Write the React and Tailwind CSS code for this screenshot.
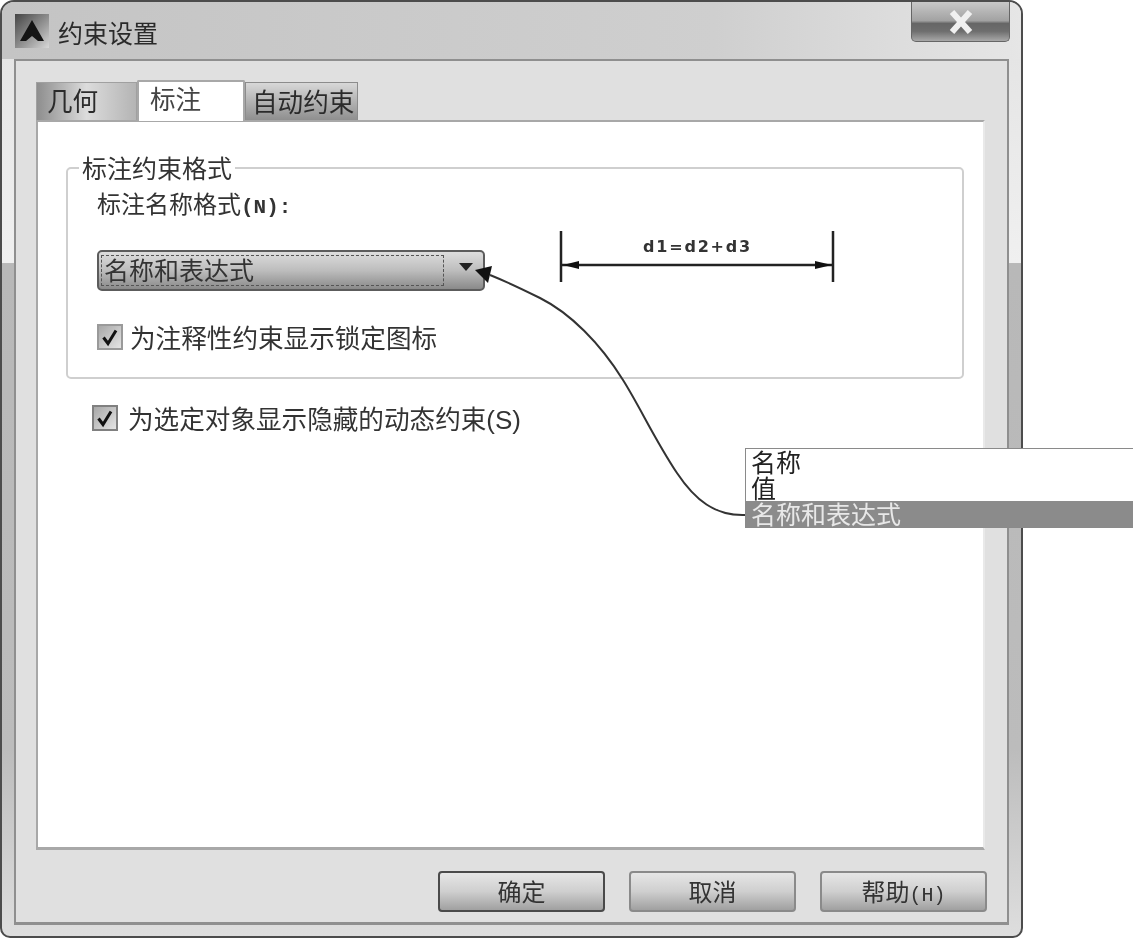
const cjk = { fontFamily: '"Noto Sans CJK SC", "Liberation Sans", sans-serif' };
const mono = { fontFamily: '"Liberation Mono", "Noto Sans CJK SC", monospace' };
const sans = { fontFamily: '"Liberation Sans", "Noto Sans CJK SC", sans-serif' };

function Check({ className = "" }) {
  return (
    <span className={"flex h-[26px] w-[26px] shrink-0 items-center justify-center border-2 border-[#9a9a9a] bg-gradient-to-br from-[#a8a8a8] to-[#e4e4e4] " + className}>
      <svg width="20" height="20" viewBox="0 0 20 20">
        <path d="M3.5 10.5 L8 16.5 L16 3.5" fill="none" stroke="#111" strokeWidth="3" />
      </svg>
    </span>
  );
}

function Button({ children, dark }) {
  return (
    <div className={"flex h-[41px] w-[167px] items-center justify-center rounded-[4px] border-2 bg-gradient-to-b from-[#e6e6e6] via-[#cfcfcf] to-[#a0a0a0] pb-[2px] text-[24px] leading-none text-[#333] " + (dark ? "border-[#4a4a4a]" : "border-[#8a8a8a]")}>
      {children}
    </div>
  );
}

export default function App() {
  return (
    <div className="relative h-[940px] w-[1133px] overflow-hidden bg-white blur-[0.5px]" style={cjk}>
      <div className="flex h-[938px] w-[1023px] flex-col rounded-t-[14px] rounded-b-[10px] border-2 border-[#4c4c4c] bg-[linear-gradient(180deg,#e2e2e2_0%,#f0f0f0_27.9%,#b8b8b8_28%,#bcbcbc_80%,#dedede_100%)]">
        {/* title bar */}
        <div className="flex h-[57px] shrink-0 items-start rounded-t-[12px] bg-gradient-to-r from-[#c4c4c4] via-[#cfcfcf] via-70% to-[#e6e6e6] pl-[13px] pr-[11px]">
          <svg width="34" height="34" viewBox="0 0 34 34" className="mt-[12px]">
            <defs>
              <linearGradient id="ic" x1="0" y1="0" x2="1" y2="1">
                <stop offset="0" stopColor="#444" />
                <stop offset="0.6" stopColor="#999" />
                <stop offset="1" stopColor="#d8d8d8" />
              </linearGradient>
            </defs>
            <rect width="34" height="34" fill="url(#ic)" />
            <path d="M17 6 L29 27 L23 27 L17 22 L11 27 L5 27 Z" fill="#141414" />
          </svg>
          <span className="ml-[9px] mt-[16px] text-[25px] leading-[28px] text-[#2a2a2a]">约束设置</span>
          <div className="ml-auto flex h-[40px] w-[99px] items-center justify-center rounded-b-[5px] border border-t-0 border-[#666] bg-[linear-gradient(180deg,#c8c8c8_0%,#a2a2a2_48%,#666_55%,#6e6e6e_75%,#a8a8a8_100%)]">
            <svg width="26" height="24" viewBox="0 0 26 24">
              <path d="M4 2 L22 22 M22 2 L4 22" stroke="#f0f0f0" strokeWidth="6" />
            </svg>
          </div>
        </div>
        {/* client */}
        <div className="mx-[12px] mb-[11px] flex min-h-0 flex-1 flex-col border-2 border-b-[3px] border-[#8f8f8f] bg-[#e0e0e0] px-[20px] pt-[19px]">
          {/* tabs */}
          <div className="flex h-[40px] items-end text-[25.6px] leading-none text-[#2b2b2b]">
            <div className="flex h-[38px] w-[101px] items-center border border-b-0 border-[#a0a0a0] bg-gradient-to-r from-[#8e8e8e] via-[#dcdcdc] to-[#b4b4b4] pb-[4px] pl-[10px]">几何</div>
            <div className="relative z-10 -mb-[1px] flex h-[41px] w-[108px] items-start rounded-t-[2px] border-2 border-b-0 border-[#a8a8a8] bg-white pl-[11px] pt-[3px] text-[#444]">标注</div>
            <div className="flex h-[38px] w-[113px] items-center border border-b-0 border-[#8c8c8c] bg-gradient-to-b from-[#d8d8d8] to-[#8f8f8f] pb-[2px] pl-[6px]">自动约束</div>
          </div>
          {/* panel */}
          <div className="flex h-[730px] w-[949px] flex-col border-2 border-b-[3px] border-[#a8a8a8] border-r-[#e9e9e9] bg-white pl-[28px] pr-[19px] pt-[45px] text-[25px] leading-none text-[#333]">
            <div className="relative flex h-[212px] flex-col rounded-[5px] border-2 border-[#cfcfcf] pl-[29px]">
              <span className="absolute -top-[15px] left-[11px] bg-white px-[3px] text-[25px] leading-[26px]">标注约束格式</span>
              <span className="mt-[20px] text-[24px] leading-[28px] text-[#333]">标注名称格式<span className="text-[21px] font-bold leading-[0]" style={mono}>(N):</span></span>
              <div className="mt-[33px] flex h-[41px] w-[388px] items-center rounded-[5px] border-2 border-[#5c5c5c] bg-gradient-to-b from-[#dddddd] via-[#bdbdbd] to-[#8a8a8a] pl-[2px] pr-[10px]">
                <div className="flex h-[31px] w-[343px] items-center border border-dashed border-[#555] pb-[2px] pl-[2px] text-[25px] text-[#333]">名称和表达式</div>
                <svg width="14" height="8" viewBox="0 0 14 8" className="mb-[8px] ml-[15px]">
                  <path d="M0 0 H14 L7 8 Z" fill="#222" />
                </svg>
              </div>
              <div className="mt-[32px] flex items-center gap-[7px]">
                <Check />
                <span className="text-[25.6px] leading-[28px]">为注释性约束显示锁定图标</span>
              </div>
            </div>
            <div className="ml-[26px] mt-[25px] flex items-center gap-[10px]">
              <Check className="border-[#808080]" />
              <span className="text-[25.6px] leading-[28px]">为选定对象显示隐藏的动态约束<span className="text-[26px] leading-[0]" style={sans}>(S)</span></span>
            </div>
          </div>
          {/* buttons */}
          <div className="mt-[21px] flex justify-end gap-[24px]">
            <Button dark>确定</Button>
            <Button>取消</Button>
            <Button>
              <span>帮助<span className="text-[20px] leading-[0]" style={mono}>(H)</span></span>
            </Button>
          </div>
        </div>
      </div>

      {/* dimension sample and leader arrow */}
      <svg className="absolute left-0 top-0" width="1133" height="940" viewBox="0 0 1133 940">
        <path d="M561 231 V282 M833 231 V282" stroke="#222" strokeWidth="2.5" />
        <path d="M562 265 H832" stroke="#222" strokeWidth="2.5" />
        <path d="M563 265 L579 261 V269 Z M832 265 L815 261 V269 Z" fill="#111" />
        <path d="M745 515 C 715 516, 695 500, 677 473 C 655 440, 640 407, 623 380 C 600 343, 570 313, 540 298 C 520 288, 505 281, 490 275" fill="none" stroke="#333" strokeWidth="2" />
        <path d="M475 270 L492 266 L488 283 Z" fill="#111" />
        <text x="643" y="252" fontFamily="DejaVu Sans, sans-serif" fontWeight="700" fontSize="16" fill="#333" letterSpacing="1.8">d1=d2+d3</text>
      </svg>

      {/* dropdown list */}
      <div className="absolute left-[745px] top-[448px] flex h-[80px] w-[388px] flex-col border border-r-0 border-[#8a8a8a] bg-white text-[25px] leading-[24px] text-[#222]">
        <span className="h-[26px] pl-[5px]">名称</span>
        <span className="h-[26px] pl-[5px]">值</span>
        <span className="flex-1 bg-[#8b8b8b] pl-[5px] text-[#e8e8e8]">名称和表达式</span>
      </div>
    </div>
  );
}
